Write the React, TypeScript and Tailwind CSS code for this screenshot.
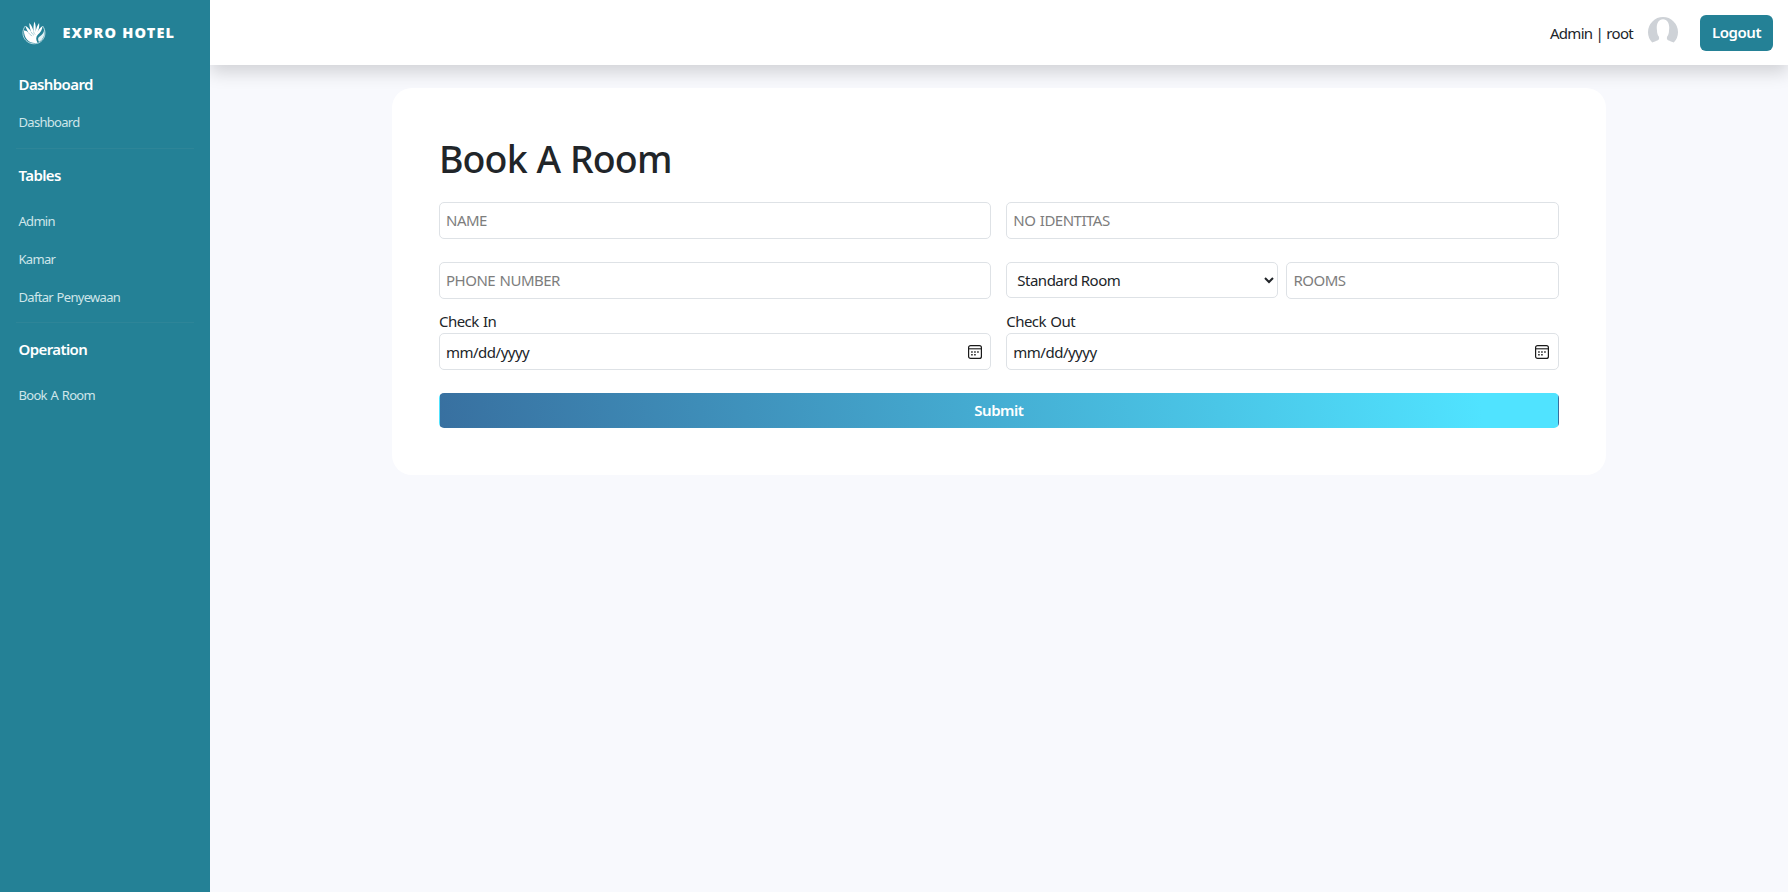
import React from "react";

const fieldClass =
  "block w-full rounded-[5px] border border-[#dee2e6] bg-white px-[6px] text-[15px] leading-6 tracking-[-0.5px] text-[#212529] outline-none placeholder:text-[#7d7d7d]";

function Logo() {
  return (
    <svg viewBox="0 0 24 24" className="h-6 w-6" fill="none">
      <path
        d="M3.400 5C0 9 0 15.500 4 19.500C8.500 24 16 23.800 20 19.500C24 15.300 23.600 8.800 20.600 5"
        stroke="#c4e0e6"
        strokeWidth="0.9"
      />
      <path
        d="M1.900 9.500C3.500 9.200 5 10.200 6.400 11.600C5 9 3.800 7 3.500 4.800C5.800 6.200 7.800 8.400 9.200 11C8 7.500 7.200 4.500 7.300 1.900C9.500 4.200 10.900 7.200 11.600 10.500C11.300 6.800 11.500 3.500 12.500 0.600C13.800 3.800 14 7.500 13.500 10.800C14.200 7.600 15.300 4.300 17.100 2C17.600 5.500 16.800 8.500 15.400 11.200C16.500 8.800 18.300 6.300 20.500 4.900C20.500 8.600 18.200 11.500 16 13.600C13.800 16 13.600 18.500 15.500 21.700C9 23.500 1.900 18.800 1.900 9.500Z"
        fill="#fff"
      />
      <path
        d="M22.100 8.800C22 12.300 19.800 14 17.600 15.600C15.800 17 15.600 18.600 17 20.900C20.900 18.800 23.200 14.500 22.100 8.800Z"
        fill="#e4f2f5"
      />
      <path
        d="M6.400 11.600C7.300 13 8.600 14.300 10.200 15M9.200 11C9.900 12.500 10.800 13.600 12 14.300M11.600 10.500C11.700 12 12.300 13 13.200 13.600"
        stroke="#5ba3b2"
        strokeWidth="0.5"
      />
    </svg>
  );
}

function Avatar() {
  return (
    <svg viewBox="0 0 30 30" className="mb-px h-[30px] w-[30px]">
      <path
        d="M4.200 25.500A15 15 0 1 1 25.800 25.500C24.300 24.700 21.800 24 20 23.200C18.700 22.600 18.700 20.700 19.200 19.600C20.600 17.800 21 15.500 21 13.500C22 8 20 2.300 15 2.300C10 2.300 8 8 9 13.500C9 15.500 9.400 17.800 10.800 19.600C11.300 20.700 11.300 22.600 10 23.200C8.200 24 5.700 24.700 4.200 25.500Z"
        fill="#ced2d7"
      />
    </svg>
  );
}

function CalendarIcon() {
  return (
    <svg viewBox="0 0 14 14" className="h-[14px] w-[14px]" fill="none" stroke="#1a1a1a">
      <rect x="0.600" y="0.600" width="12.800" height="12.800" rx="2" strokeWidth="1.200" />
      <path d="M0.600 3.800H13.400" strokeWidth="1.100" />
      <path
        d="M3.200 6.900H4.700M6.200 6.900H7.700M9.200 6.900H10.700M3.200 9.700H4.700M6.200 9.700H7.700"
        strokeWidth="1.500"
      />
    </svg>
  );
}

function DateField({ label }: { label: string }) {
  return (
    <div>
      <div className="text-[15px] leading-[23px] tracking-[-0.55px] [word-spacing:1px]">{label}</div>
      <div className="flex h-[37px] items-center justify-between rounded-[5px] border border-[#dee2e6] bg-white pr-[8.500px] pl-[6px]">
        <span className="text-[15px] leading-6 tracking-[-0.5px]">mm/dd/yyyy</span>
        <CalendarIcon />
      </div>
    </div>
  );
}

function Heading({ children }: { children: React.ReactNode }) {
  return (
    <h2 className="px-[2.500px] text-[15px] leading-6 font-semibold tracking-[-0.6px] text-white">
      {children}
    </h2>
  );
}

function Item({ children }: { children: React.ReactNode }) {
  return (
    <a className="block px-[2.500px] text-[13px] leading-[22px] tracking-[-0.7px] text-[#cfe6ea] [word-spacing:1px]">
      {children}
    </a>
  );
}

export default function App() {
  return (
    <div className="flex h-[892px] w-full overflow-hidden bg-[#f8f9fd] font-['Noto_Sans','Open_Sans',sans-serif] text-[#212529]">
      <aside className="relative z-10 flex w-[209.600px] shrink-0 flex-col bg-[#248196] px-4">
        <div className="flex h-[65px] items-center pl-[6px]">
          <Logo />
          <span className="mb-[2px] ml-[16.500px] text-[14.500px] leading-6 font-black tracking-[1.15px] whitespace-nowrap text-white">
            EXPRO HOTEL
          </span>
        </div>
        <div className="mt-[7px]">
          <Heading>Dashboard</Heading>
        </div>
        <div className="mt-[15px]">
          <Item>Dashboard</Item>
        </div>
        <hr className="mt-[15px] w-[178px] border-[#2e8598]" />
        <div className="mt-[14px]">
          <Heading>Tables</Heading>
        </div>
        <div className="mt-[23px] flex flex-col gap-4">
          <Item>Admin</Item>
          <Item>Kamar</Item>
          <Item>Daftar Penyewaan</Item>
        </div>
        <hr className="mt-[14px] w-[178px] border-[#2e8598]" />
        <div className="mt-[14px]">
          <Heading>Operation</Heading>
        </div>
        <div className="mt-[23px]">
          <Item>Book A Room</Item>
        </div>
      </aside>

      <div className="flex min-w-0 flex-1 flex-col">
        <header className="flex h-[65px] shrink-0 items-center justify-end bg-white pr-[15px] shadow-[0_8px_16px_rgba(0,0,0,0.15)]">
          <span className="text-[15px] leading-6 tracking-[-0.7px] whitespace-nowrap">Admin | root</span>
          <span className="ml-[15px]">
            <Avatar />
          </span>
          <button className="ml-[22px] h-9 w-[73px] rounded-md bg-[#248196] pb-px text-[15px] leading-6 font-semibold tracking-[-0.45px] text-white">
            Logout
          </button>
        </header>

        <main className="px-[182.400px] pt-[23px]">
          <form className="h-[387px] rounded-[20px] bg-white px-[47px] pt-[47px]">
            <h1 className="text-[37.500px] leading-[48px] font-medium tracking-[-0.9px] [word-spacing:1px]">
              Book A Room
            </h1>
            <div className="mt-[19px] grid grid-cols-2 gap-x-[15px] gap-y-[23px]">
              <input className={`${fieldClass} h-[37px] pb-[2px]`} placeholder="NAME" />
              <input className={`${fieldClass} h-[37px] pb-[2px] [word-spacing:1px]`} placeholder="NO IDENTITAS" />
              <input className={`${fieldClass} h-[37px] pb-[2px] [word-spacing:1px]`} placeholder="PHONE NUMBER" />
              <div className="grid grid-cols-2 items-start gap-2">
                <select className={`${fieldClass} h-9`} defaultValue="standard">
                  <option value="standard">Standard Room</option>
                </select>
                <input className={`${fieldClass} h-[37px] pb-[2px]`} placeholder="ROOMS" />
              </div>
            </div>
            <div className="mt-[11px] grid grid-cols-2 gap-x-[15px]">
              <DateField label="Check In" />
              <DateField label="Check Out" />
            </div>
            <button
              type="button"
              className="mt-[23px] block h-[35px] w-full rounded-[5px] border border-transparent bg-[linear-gradient(80deg,#3870a0_0%,#50e3ff_93%)] pb-[2px] text-[15px] leading-6 font-semibold tracking-[-0.5px] text-white"
            >
              Submit
            </button>
          </form>
        </main>
      </div>
    </div>
  );
}
